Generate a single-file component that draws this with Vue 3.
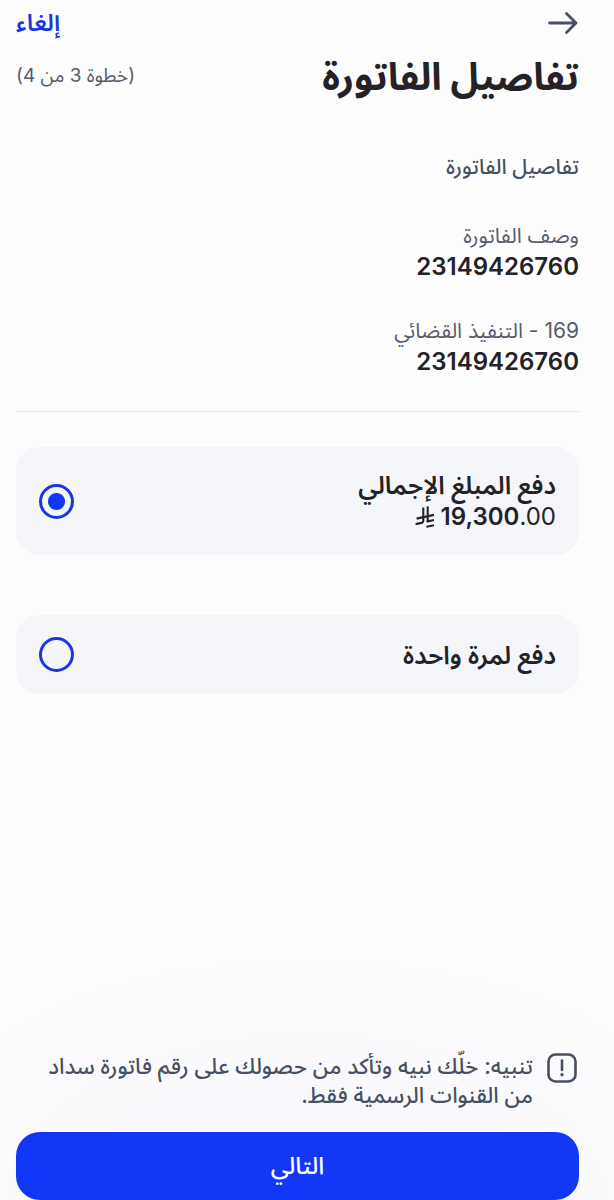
<template>
  <div class="page" dir="rtl" lang="ar">
    <header class="topbar">
      <button type="button" class="icon-btn" aria-label="رجوع">
        <svg width="31" height="24" viewBox="0 0 31 24" fill="none">
          <path d="M1.5 12H28M18.5 2.5L28 12L18.5 21.5" stroke="#474f61" stroke-width="2.8" stroke-linecap="round" stroke-linejoin="round" />
        </svg>
      </button>
      <button type="button" class="cancel">إلغاء</button>
    </header>

    <div class="heading">
      <h1>تفاصيل الفاتورة</h1>
      <span class="step">(خطوة {{ step }} من {{ totalSteps }})</span>
    </div>

    <main>
      <h2>تفاصيل الفاتورة</h2>
      <dl class="details">
        <div v-for="item in details" :key="item.label">
          <dt>{{ item.label }}</dt>
          <dd>{{ item.value }}</dd>
        </div>
      </dl>

      <div class="options">
        <label v-for="option in options" :key="option.id" class="option">
          <span class="option-text">
            <span class="option-title">{{ option.title }}</span>
            <span v-if="option.whole" class="amount">
              <bdi dir="ltr"><b>{{ option.whole }}</b>{{ option.fraction }}</bdi>
              <svg class="riyal" width="20" height="22" viewBox="0 0 20 22" fill="none" stroke="#242226" stroke-width="2.1">
                <path d="M8.3 1.6V14.4Q8.3 16.4 6.3 16.9L0.6 18.1" />
                <path d="M12.7 0.4V15.8" />
                <path d="M1.6 12.6L19 8.9" />
                <path d="M11.7 15.6L19 14" />
                <path d="M11.4 20.8L19 19.2" />
              </svg>
            </span>
          </span>
          <input type="radio" name="payment" :value="option.id" v-model="selected">
        </label>
      </div>
    </main>

    <footer>
      <div class="notice">
        <svg width="30" height="30" viewBox="0 0 30 30" fill="none" stroke="#474f61" stroke-width="2.6" stroke-linecap="round">
          <rect x="1.5" y="1.5" width="27" height="27" rx="7" />
          <path d="M15 7.5V17" />
          <circle cx="15" cy="21.8" r="1.7" fill="#474f61" stroke="none" />
        </svg>
        <p>تنبيه: خلّك نبيه وتأكد من حصولك على رقم فاتورة سداد من القنوات الرسمية فقط.</p>
      </div>
      <button type="button" class="next">التالي</button>
    </footer>
  </div>
</template>

<script setup>
import { ref } from 'vue';

const step = 3;
const totalSteps = 4;
const selected = ref('full');

const details = [
  { label: 'وصف الفاتورة', value: '23149426760' },
  { label: '169 - التنفيذ القضائي', value: '23149426760' }
];

const options = [
  { id: 'full', title: 'دفع المبلغ الإجمالي', whole: '19,300', fraction: '.00' },
  { id: 'once', title: 'دفع لمرة واحدة' }
];
</script>

<style>
body {
  margin: 0;
  background: #fdfdfe;
}
</style>

<style scoped>
.page {
  display: flex;
  flex-direction: column;
  box-sizing: border-box;
  min-height: 100vh;
  font-family: Inter, "Noto Sans Arabic", "DejaVu Sans", sans-serif;
  color: #242226;
}
button {
  border: 0;
  padding: 0;
  background: none;
  font-family: inherit;
  cursor: pointer;
}
.topbar,
.heading {
  display: flex;
  align-items: center;
  justify-content: space-between;
  padding: 0 35px 0 16px;
}
.topbar {
  height: 46px;
}
.icon-btn {
  display: flex;
}
.cancel {
  color: #1a36e0;
  font-size: 24px;
  font-weight: 600;
  line-height: 32px;
}
h1 {
  margin: 0;
  font-size: 38px;
  font-weight: 700;
  line-height: 60px;
}
.step {
  color: #565c69;
  font-size: 19px;
}
main {
  padding: 45px 35px 40px 16px;
}
h2 {
  margin: 0 0 38px;
  color: #474f61;
  font-size: 21px;
  font-weight: 500;
  line-height: 32px;
}
.details {
  display: flex;
  flex-direction: column;
  gap: 34px;
  margin: 0 0 35px;
  padding-bottom: 34px;
  border-bottom: 1px solid #e2e4ee;
}
dt {
  color: #565c69;
  font-size: 21px;
  line-height: 30px;
}
dd {
  margin: 0;
  font-size: 24px;
  font-weight: 600;
  line-height: 31px;
}
.options {
  display: flex;
  flex-direction: column;
  gap: 60px;
}
.option {
  display: flex;
  align-items: center;
  justify-content: space-between;
  padding: 22px 23px;
  border-radius: 24px;
  background: #f4f6fa;
  cursor: pointer;
}
.option-text {
  display: flex;
  flex-direction: column;
  font-size: 24px;
  line-height: 32px;
}
.option-title {
  font-size: 25px;
  font-weight: 600;
}
.amount {
  display: flex;
  align-items: center;
  gap: 6px;
}
.amount b {
  font-weight: 600;
}
input {
  appearance: none;
  flex: none;
  box-sizing: border-box;
  width: 35px;
  height: 35px;
  margin: 0;
  border: 3px solid #1a36e0;
  border-radius: 50%;
}
input:checked {
  background: radial-gradient(circle, #1337f7 8px, transparent 9px);
}
footer {
  margin-top: auto;
  padding: 92px 35px 0 16px;
  background: radial-gradient(ellipse 70% 100% at 50% 100%, #f9f9fd 40%, #fdfdfe 100%);
}
.notice {
  display: flex;
  align-items: flex-start;
  gap: 14px;
  padding: 0 2px;
  margin-bottom: 22px;
}
.notice svg {
  flex: none;
  margin-top: 1px;
}
.notice p {
  margin: 0;
  color: #474f61;
  font-size: 22px;
  font-weight: 500;
  line-height: 29px;
}
.next {
  display: block;
  width: 100%;
  height: 68px;
  border-radius: 24px;
  background: #1337f7;
  color: #fff;
  font-size: 24px;
  font-weight: 500;
}
</style>
